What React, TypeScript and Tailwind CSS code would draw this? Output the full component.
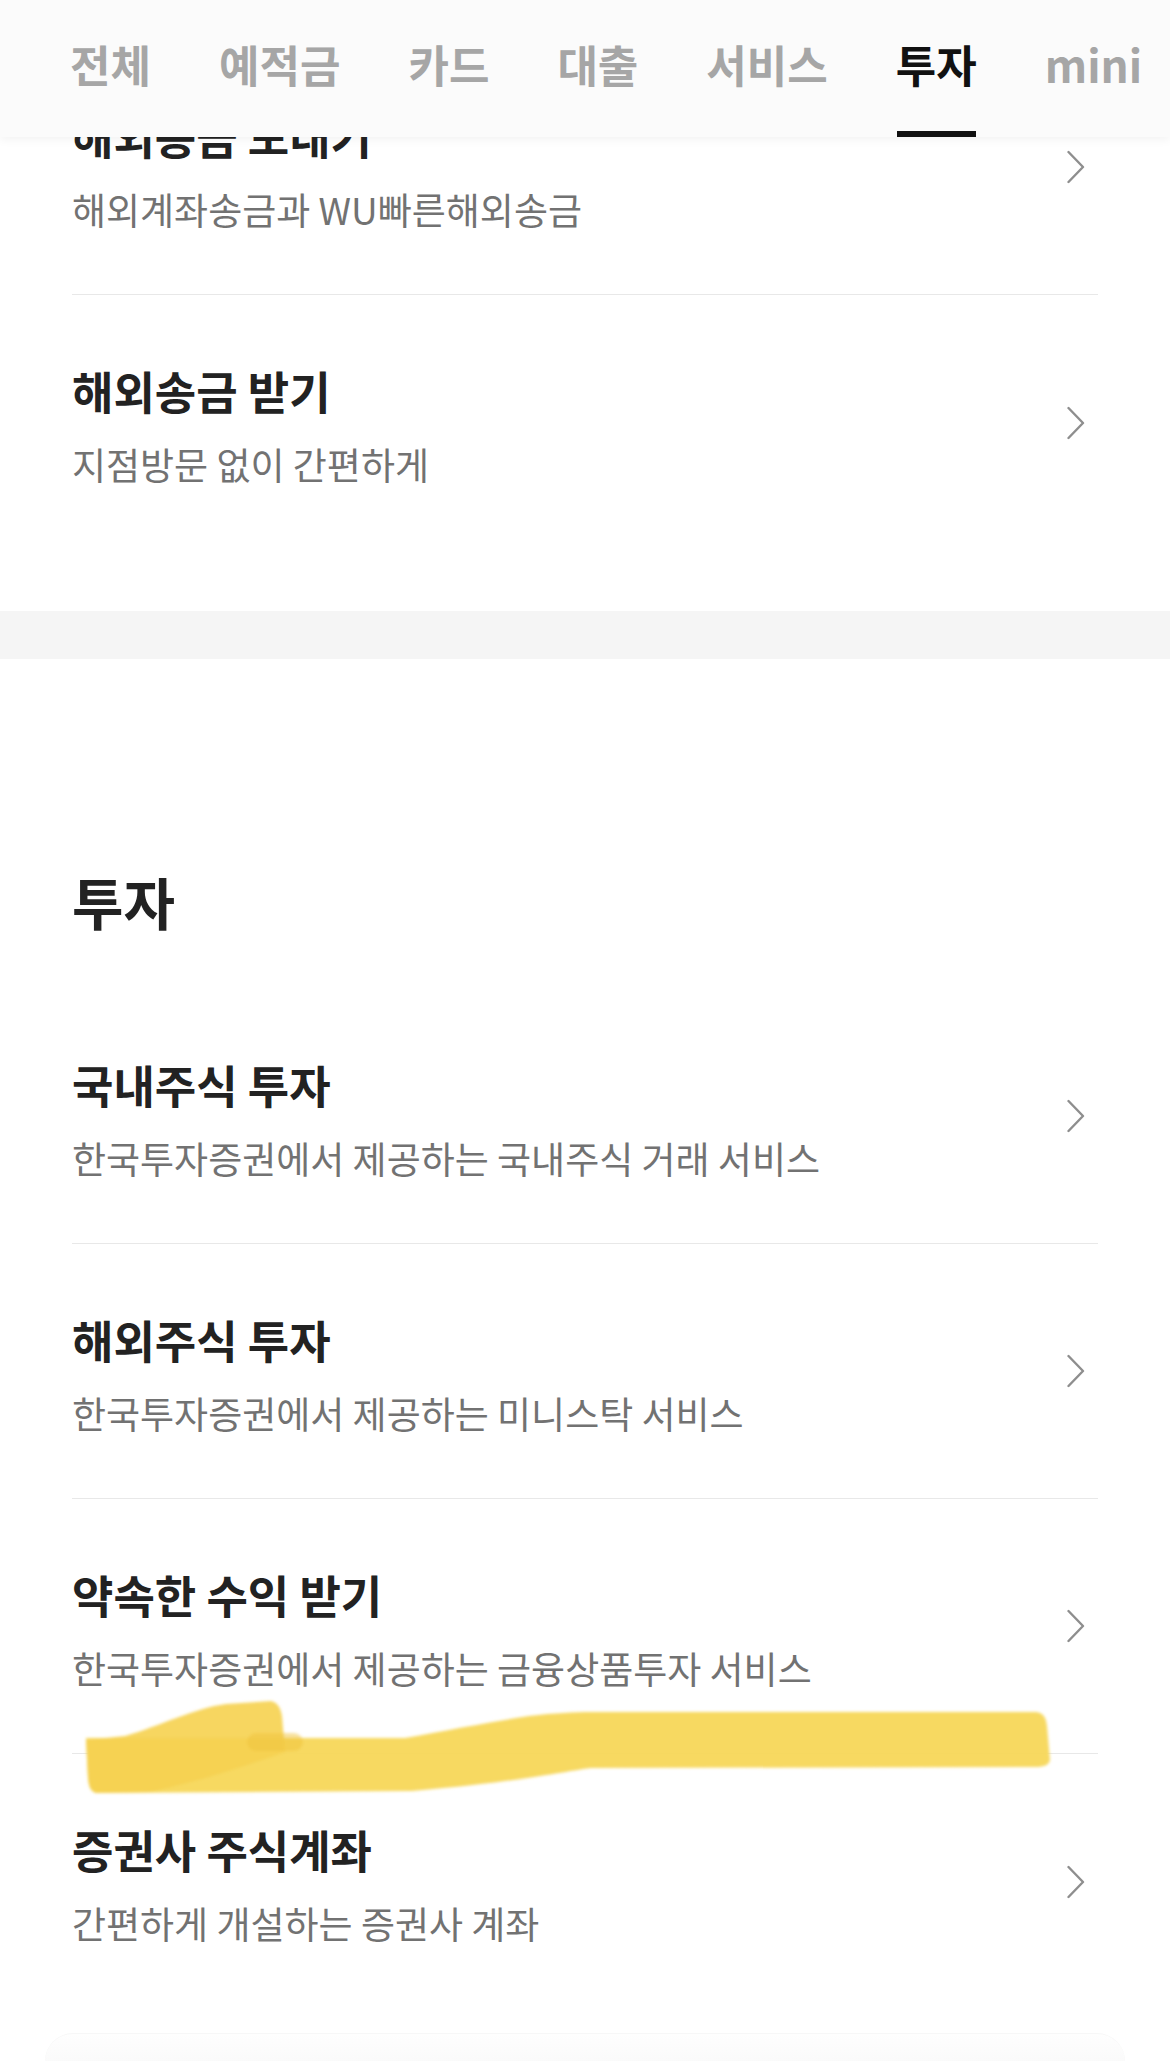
import React from 'react';

interface MenuItem {
  title: string;
  desc: string;
}

const tabs = ['전체', '예적금', '카드', '대출', '서비스', '투자', 'mini'];
const activeTab = '투자';

const remitItems: MenuItem[] = [
  { title: '해외송금 보내기', desc: '해외계좌송금과 WU빠른해외송금' },
  { title: '해외송금 받기', desc: '지점방문 없이 간편하게' },
];

const investItems: MenuItem[] = [
  { title: '국내주식 투자', desc: '한국투자증권에서 제공하는 국내주식 거래 서비스' },
  { title: '해외주식 투자', desc: '한국투자증권에서 제공하는 미니스탁 서비스' },
  { title: '약속한 수익 받기', desc: '한국투자증권에서 제공하는 금융상품투자 서비스' },
  { title: '증권사 주식계좌', desc: '간편하게 개설하는 증권사 계좌' },
];

const Chevron: React.FC = () => (
  <svg width="18" height="34" viewBox="0 0 18 34" fill="none" className="mr-[13px] shrink-0">
    <polyline points="1.5,2 16,17 1.5,32" stroke="#8e8e8e" strokeWidth="2.4" strokeLinecap="round" strokeLinejoin="round" />
  </svg>
);

const Row: React.FC<{ item: MenuItem; last?: boolean }> = ({ item, last }) => (
  <div className={`flex h-[255px] items-center justify-between ${last ? '' : 'border-b border-[#e8e8e8]'}`}>
    <div className="flex h-full flex-col pt-[66px]">
      <div className="text-[45px] font-bold leading-[59px] text-[#222222]">{item.title}</div>
      <div className="mt-[20px] text-[37px] leading-[48px] text-[#727272]">{item.desc}</div>
    </div>
    <Chevron />
  </div>
);

const Highlight: React.FC = () => (
  <svg className="pointer-events-none absolute inset-0 z-[5]" width="1170" height="2061" viewBox="0 0 1170 2061">
    <defs>
      <filter id="soft" x="-5%" y="-20%" width="110%" height="140%">
        <feGaussianBlur stdDeviation="1.6" />
      </filter>
    </defs>
    <g filter="url(#soft)" style={{ mixBlendMode: 'multiply' }}>
      <path
        d="M86 1738 L405 1738 C450 1730 490 1722 529 1716 C555 1713 575 1712 591 1712 L1036 1712 C1044 1713 1046 1718 1047 1726 L1050 1760 C1049 1765 1044 1767 1036 1767 L591 1768 C560 1772 520 1782 412 1791 L96 1793 C90 1791 89 1786 88 1778 Z"
        fill="#f7d758"
        fillOpacity="0.95"
      />
      <path
        d="M86 1740 L125 1736 C160 1726 195 1708 226 1704 L271 1701 C279 1703 281 1710 282 1716 L285 1752 C250 1764 205 1780 150 1792 L96 1793 C90 1791 89 1786 88 1778 Z"
        fill="#f6d250"
        fillOpacity="0.9"
      />
      <rect x="247" y="1733" width="56" height="18" rx="9" fill="#f0c33c" fillOpacity="0.5" />
    </g>
  </svg>
);

export default function App() {
  return (
    <div
      className="relative h-[2061px] w-[1170px] overflow-hidden bg-white"
      style={{ fontFamily: '"Noto Sans CJK KR", "Noto Sans", sans-serif' }}
    >
      {/* tab bar, fixed over the scrolled list */}
      <div className="absolute left-0 right-0 top-0 z-10 h-[137px] overflow-hidden bg-[#fbfbfb] shadow-[0_2px_10px_rgba(0,0,0,0.06)]">
        <div className="flex h-full gap-[68px] pl-[70px] whitespace-nowrap">
          {tabs.map(tab => (
            <div key={tab} className="relative h-full pt-[36px]">
              <span
                className={`text-[44px] font-bold leading-[56px] ${tab === activeTab ? 'text-[#111111]' : 'text-[#a6a6a6]'}`}
              >
                {tab}
              </span>
              {tab === activeTab && <div className="absolute bottom-0 left-[1px] right-[1px] h-[6px] bg-[#111111]" />}
            </div>
          ))}
        </div>
      </div>

      <div className="pt-[40px]">
        <section className="px-[72px] pb-[61px]">
          {remitItems.map((item, i) => (
            <Row key={item.title} item={item} last={i === remitItems.length - 1} />
          ))}
        </section>

        <div className="h-[48px] bg-[#f5f5f5]" />

        <section className="px-[72px] pt-[204px]">
          <h2 className="mb-[50px] text-[56px] font-bold leading-[76px] text-[#222222]">투자</h2>
          {investItems.map((item, i) => (
            <Row key={item.title} item={item} last={i === investItems.length - 1} />
          ))}
        </section>

        <div className="mx-[45px] mt-[24px] h-[40px] rounded-t-[28px] border-t border-[#f7f7f7] bg-gradient-to-b from-[#fefefe] to-[#f9f9f9]" />
      </div>

      <Highlight />
    </div>
  );
}
